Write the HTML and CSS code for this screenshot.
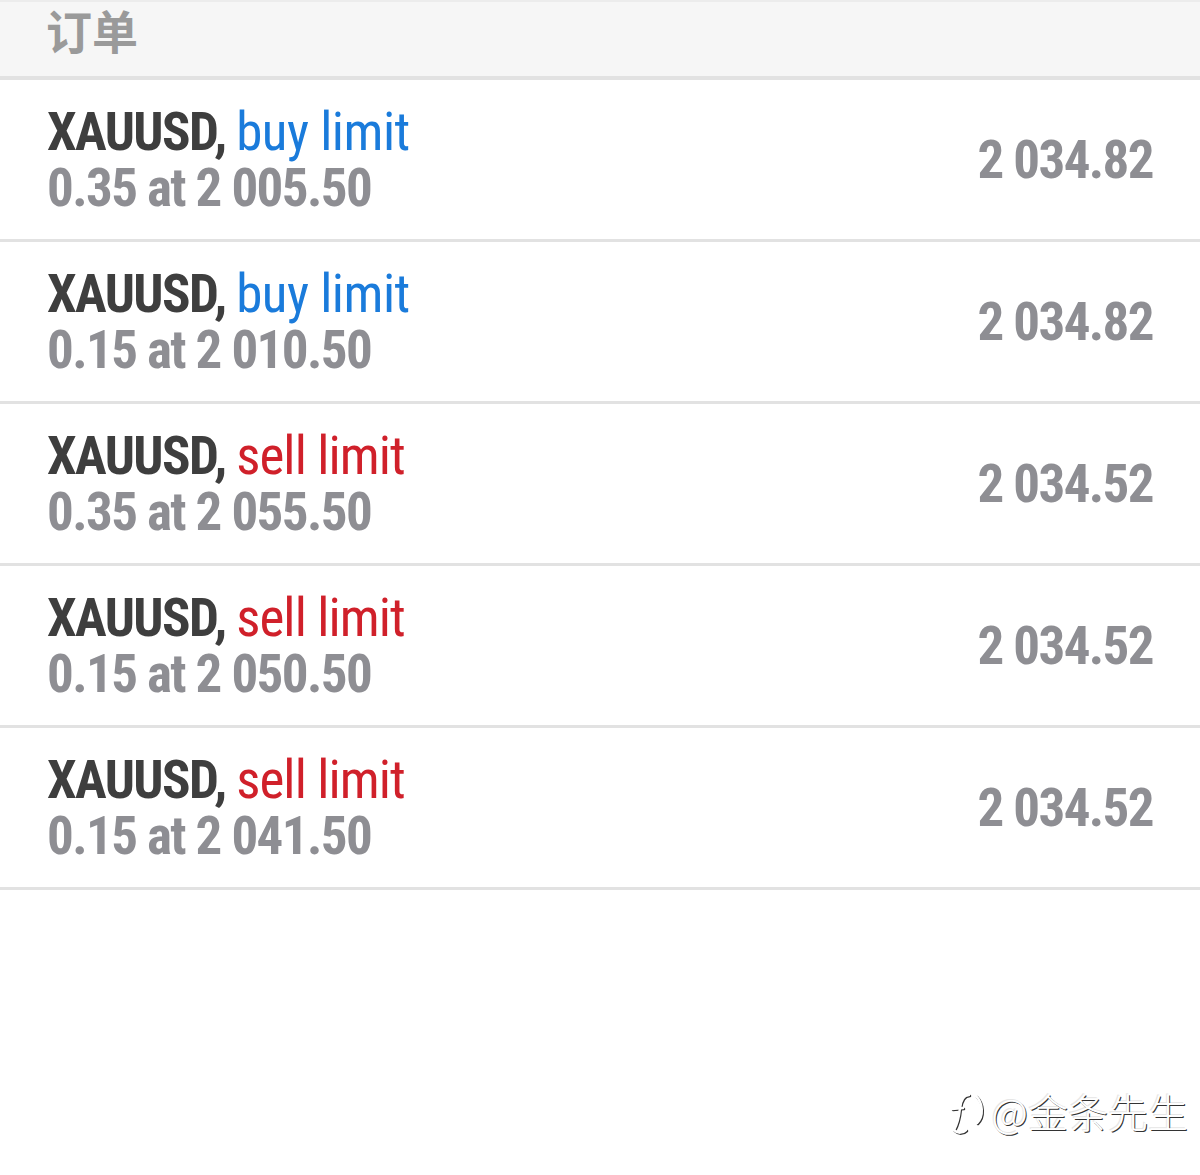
FILE: index.html
```html
<!DOCTYPE html>
<html lang="zh-CN">

<head>
    <meta charset="UTF-8">
    <meta name="viewport" content="width=device-width, initial-scale=1.0">
    <title>订单</title>
    <link rel="stylesheet" href="styles.css">
</head>

<body>
    <div class="header">订单</div>

    <ul class="orders">
        <li class="order">
            <div class="order-info">
                <div class="order-title">XAUUSD, <span class="buy">buy limit</span></div>
                <div class="order-volume">0.35 at 2 005.50</div>
            </div>
            <div class="order-price">2 034.82</div>
        </li>
        <li class="order">
            <div class="order-info">
                <div class="order-title">XAUUSD, <span class="buy">buy limit</span></div>
                <div class="order-volume">0.15 at 2 010.50</div>
            </div>
            <div class="order-price">2 034.82</div>
        </li>
        <li class="order">
            <div class="order-info">
                <div class="order-title">XAUUSD, <span class="sell">sell limit</span></div>
                <div class="order-volume">0.35 at 2 055.50</div>
            </div>
            <div class="order-price">2 034.52</div>
        </li>
        <li class="order">
            <div class="order-info">
                <div class="order-title">XAUUSD, <span class="sell">sell limit</span></div>
                <div class="order-volume">0.15 at 2 050.50</div>
            </div>
            <div class="order-price">2 034.52</div>
        </li>
        <li class="order">
            <div class="order-info">
                <div class="order-title">XAUUSD, <span class="sell">sell limit</span></div>
                <div class="order-volume">0.15 at 2 041.50</div>
            </div>
            <div class="order-price">2 034.52</div>
        </li>
    </ul>

    <!-- watermark from the original screenshot -->
    <div class="watermark">
        <svg class="watermark-logo" width="36" height="44" viewBox="0 0 36 44">
            <path d="M19 3 C13 3 11 8 10 16 C9 26 7 33 4 38 C8 42 13 41 16 38" fill="none" stroke="#fff" stroke-width="2.5" stroke-linecap="round" />
            <path d="M2 17 L13 16" fill="none" stroke="#fff" stroke-width="2.5" stroke-linecap="round" />
            <path d="M26 4 C33 11 34 24 27 31" fill="none" stroke="#fff" stroke-width="2.5" stroke-linecap="round" />
        </svg>
        <span>@金条先生</span>
    </div>
</body>

</html>
```

FILE: styles.css
```css
body {
    margin: 0;
    background: #fff;
    font-family: 'Roboto', 'Noto Sans CJK SC', sans-serif;
    height: 1175px;
    position: relative;
    overflow: hidden;
}

.header {
    height: 74px;
    padding-left: 46px;
    background-color: #f6f6f6;
    border-top: 2px solid #ececec;
    border-bottom: 4px solid #e2e2e2;
    color: #9a9a9a;
    font-family: 'Noto Sans CJK SC', sans-serif;
    font-size: 46px;
    font-weight: bold;
    line-height: 54px;
}

.orders {
    list-style: none;
    margin: 0;
    padding: 0;
}

.order {
    display: flex;
    align-items: center;
    justify-content: space-between;
    padding: 24px 47px 23px 47px;
    border-bottom: 3px solid #e2e2e2;
}

.order-title,
.order-volume,
.order-price {
    font-size: 53px;
    line-height: 56px;
    font-weight: bold;
    font-stretch: condensed;
    letter-spacing: -1.6px;
    white-space: nowrap;
}

.order-title {
    color: #3e3e3e;
}

.order-volume,
.order-price {
    color: #8e8e93;
}

.buy,
.sell {
    font-weight: normal;
    letter-spacing: -0.5px;
}

.buy {
    color: #1a7bdb;
}

.sell {
    color: #d0202a;
    letter-spacing: -0.9px;
}

.watermark {
    position: absolute;
    right: 12px;
    top: 1082px;
    display: flex;
    align-items: center;
    gap: 2px;
    color: #fff;
    font-family: 'Noto Sans CJK SC', sans-serif;
    font-size: 40px;
    font-weight: 300;
    text-shadow: 1px 1px 0 #333, -1px -1px 0 #e6e6e6;
}

.watermark-logo {
    margin-top: 6px;
    margin-right: 4px;
    filter: drop-shadow(1px 1px 0 #333);
}
```
